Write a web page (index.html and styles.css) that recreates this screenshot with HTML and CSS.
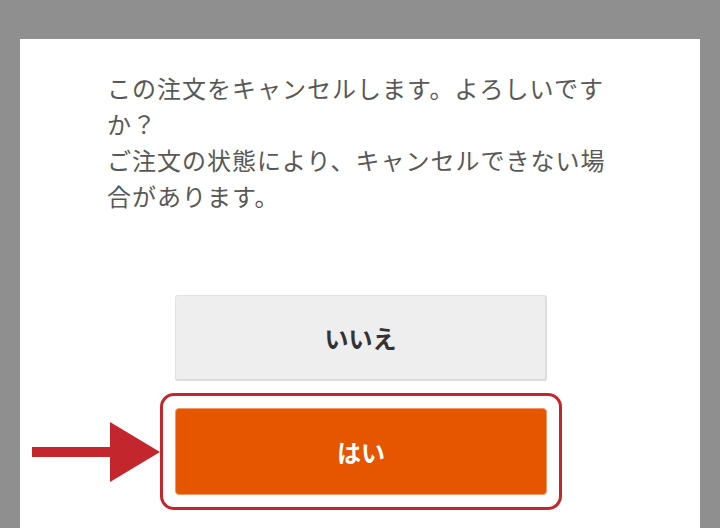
FILE: index.html
```html
<!DOCTYPE html>
<html lang="ja">
<head>
<meta charset="utf-8">
<link rel="stylesheet" href="styles.css">
</head>
<body>
<div class="dialog">
  <p class="message">この注文をキャンセルします。よろしいですか？<br>ご注文の状態により、キャンセルできない場合があります。</p>
  <div class="actions">
    <button class="btn btn-no">いいえ</button>
    <div class="highlight">
      <svg class="arrow" width="128" height="60" viewBox="0 0 128 60" aria-hidden="true">
        <rect x="0" y="25" width="80" height="10" fill="#c4262e"/>
        <polygon points="78,0 128,30 78,60" fill="#c4262e"/>
      </svg>
      <button class="btn btn-yes">はい</button>
    </div>
  </div>
</div>
</body>
</html>
```
FILE: styles.css
```css
html, body {
  margin: 0;
  padding: 0;
  height: 100%;
  overflow: hidden;
}
body {
  background: #8f8f8f;
  font-family: "Noto Sans CJK JP", "Noto Sans", sans-serif;
}
.dialog {
  margin: 39px 20px 0 20px;
  background: #ffffff;
  height: 489px;
  padding-top: 31px;
  box-sizing: border-box;
}
.message {
  margin: 0 0 0 87px;
  width: 512px;
  font-size: 24px;
  letter-spacing: 1px;
  line-height: 36px;
  color: #585858;
}
.actions {
  margin-top: 81px;
  padding-left: 140px;
  display: flex;
  flex-direction: column;
  align-items: flex-start;
}
.btn {
  width: 372px;
  height: 86px;
  font-family: "Noto Sans CJK JP", "Noto Sans", sans-serif;
  font-size: 24px;
  font-weight: bold;
  box-sizing: border-box;
  padding: 0;
  cursor: pointer;
}
.btn-no {
  margin-left: 15px;
  background: #eeeeee;
  color: #333333;
  border: 1px solid #e2e2e2;
  border-right: 2px solid #dcdcdc;
  border-bottom: 2px solid #dcdcdc;
  border-radius: 3px;
}
.highlight {
  position: relative;
  margin-top: 12px;
  width: 402px;
  box-sizing: border-box;
  padding: 12px;
  border: 3px solid #c4262e;
  border-radius: 14px;
}
.arrow {
  position: absolute;
  left: -131px;
  top: 26px;
}
.btn-yes {
  display: block;
  height: 87px;
  background: #e65500;
  color: #ffffff;
  border: 1px solid #f19a66;
  border-radius: 4px;
}
```
